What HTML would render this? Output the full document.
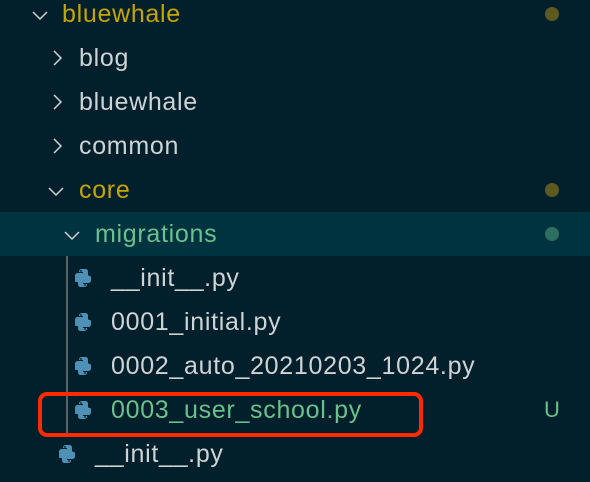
<!DOCTYPE html>
<html><head><style>
body{margin:0;width:590px;height:482px;background:#01202b;overflow:hidden;font-family:"Liberation Sans",sans-serif;font-size:25px;letter-spacing:0.7px;position:relative}
.r{position:absolute;left:0;right:0;height:44px;line-height:44px;white-space:nowrap}
.t{position:absolute;top:0}
.y{color:#c7a500}.w{color:#cfd3d6}.g{color:#6bc18c}
.ch{position:absolute;width:16px;height:16px}
.dot{position:absolute;left:545px;top:15px;width:14px;height:14px;border-radius:50%}
.py{position:absolute;top:13px}
</style></head><body>
<svg width="0" height="0" style="position:absolute"><defs>
<symbol id="p" viewBox="0 0 16 18"><path fill="#4f90b6" d="M7 0h3c2 0 3 1 3 3v4c0 1-1 2-2 2H6c-2 0-3 1-3 3v1H1c-1 0-1-1-1-3V7c0-2 1-3 3-3h5V3H4c0-2 1-3 3-3z M12 6c1 0 1 0 1 0v0zm2 1h1c1 0 1 1 1 3v1c0 2-1 3-3 3H8v1h4c0 2-1 3-3 3H6c-2 0-3-1-3-3v-4c0-1 1-2 2-2h5c2 0 3-1 3-3z"/><circle cx="6" cy="2" r="0.9" fill="#01202b"/><circle cx="10" cy="16" r="0.9" fill="#01202b"/></symbol>
</defs></svg>
<div class="r" style="top:212px;background:#003340"></div>
<div style="position:absolute;left:66px;top:256px;width:2px;height:178px;background:#5a6266"></div>

<div class="r" style="top:-8px"><svg class="ch" style="left:32px;top:15px" viewBox="0 0 16 16"><path d="M1 5l7 7 7-7" fill="none" stroke="#cfd3d6" stroke-width="1.5"/></svg><span class="t y" style="left:62px">bluewhale</span><div class="dot" style="background:#5d5a21"></div></div>
<div class="r" style="top:36px"><svg class="ch" style="left:49px;top:14px" viewBox="0 0 16 16"><path d="M5 1l7 7-7 7" fill="none" stroke="#cfd3d6" stroke-width="1.5"/></svg><span class="t w" style="left:79px">blog</span></div>
<div class="r" style="top:80px"><svg class="ch" style="left:49px;top:14px" viewBox="0 0 16 16"><path d="M5 1l7 7-7 7" fill="none" stroke="#cfd3d6" stroke-width="1.5"/></svg><span class="t w" style="left:79px">bluewhale</span></div>
<div class="r" style="top:124px"><svg class="ch" style="left:49px;top:14px" viewBox="0 0 16 16"><path d="M5 1l7 7-7 7" fill="none" stroke="#cfd3d6" stroke-width="1.5"/></svg><span class="t w" style="left:79px">common</span></div>
<div class="r" style="top:168px"><svg class="ch" style="left:48px;top:15px" viewBox="0 0 16 16"><path d="M1 5l7 7 7-7" fill="none" stroke="#cfd3d6" stroke-width="1.5"/></svg><span class="t y" style="left:79px">core</span><div class="dot" style="background:#5d5a21"></div></div>
<div class="r" style="top:212px"><svg class="ch" style="left:64px;top:15px" viewBox="0 0 16 16"><path d="M1 5l7 7 7-7" fill="none" stroke="#cfd3d6" stroke-width="1.5"/></svg><span class="t g" style="left:95px">migrations</span><div class="dot" style="background:#2f6f62"></div></div>
<div class="r" style="top:256px"><svg class="py" style="left:75px" width="16" height="18"><use href="#p"/></svg><span class="t w" style="left:111px">__init__.py</span></div>
<div class="r" style="top:300px"><svg class="py" style="left:75px" width="16" height="18"><use href="#p"/></svg><span class="t w" style="left:111px">0001_initial.py</span></div>
<div class="r" style="top:344px"><svg class="py" style="left:75px" width="16" height="18"><use href="#p"/></svg><span class="t w" style="left:111px">0002_auto_20210203_1024.py</span></div>
<div class="r" style="top:388px"><svg class="py" style="left:75px" width="16" height="18"><use href="#p"/></svg><span class="t g" style="left:111px">0003_user_school.py</span><span class="t g" style="left:544px;font-size:22px">U</span></div>
<div class="r" style="top:432px"><svg class="py" style="left:59px" width="16" height="18"><use href="#p"/></svg><span class="t w" style="left:95px">__init__.py</span></div>
<div style="position:absolute;left:38px;top:392px;width:377px;height:37px;border:4px solid #ff2a00;border-radius:9px"></div>
</body></html>
